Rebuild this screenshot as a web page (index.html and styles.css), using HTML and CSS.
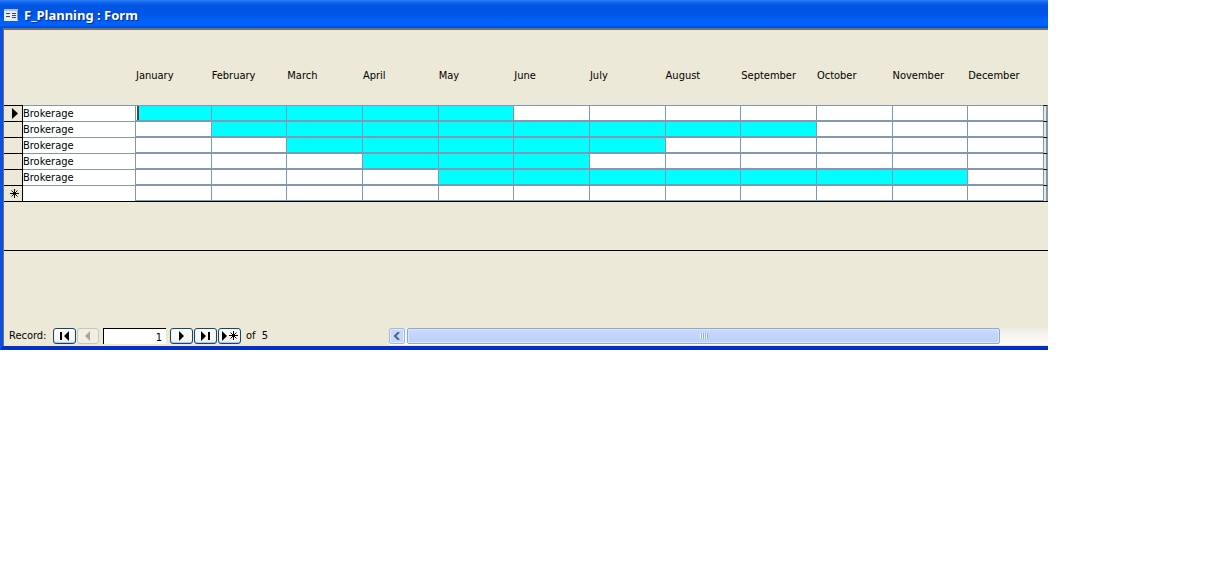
FILE: index.html
```html
<!DOCTYPE html>
<html lang="en">
<head>
<meta charset="utf-8">
<title>F_Planning : Form</title>
<link rel="stylesheet" href="styles.css">
</head>
<body>
<main class="window">
  <header class="titlebar">
    <svg class="form-icon" width="14" height="12" viewBox="0 0 14 12" shape-rendering="crispEdges" aria-hidden="true">
      <rect width="14" height="12" fill="#e9ecf2"/>
      <rect width="14" height="2" fill="#a9c0ec"/>
      <path d="M0 11h14V2h-1v9H0z" fill="#8296bd"/>
      <path d="M2 4h4v1H2zM2 7h4v1H2zM8 4h4v1H8zM8 6h4v1H8zM8 8h4v1H8z" fill="#38465f"/>
    </svg>
    <h1 class="title">F_Planning : Form</h1>
  </header>
  <div class="client">
    <table class="planning">
      <colgroup><col class="col-selector"><col class="col-name"><col span="12"><col class="col-end"></colgroup>
      <thead>
        <tr><td></td><td></td><th scope="col">January</th><th scope="col">February</th><th scope="col">March</th><th scope="col">April</th><th scope="col">May</th><th scope="col">June</th><th scope="col">July</th><th scope="col">August</th><th scope="col">September</th><th scope="col">October</th><th scope="col">November</th><th scope="col">December</th><td></td></tr>
      </thead>
      <tbody>
        <tr><td class="selector"><svg class="mark" width="6" height="11" viewBox="0 0 6 11" aria-hidden="true"><path d="M0 0L6 5.500L0 11z"/></svg></td><td class="name"><input class="name-box" aria-label="Name, record 1" value="Brokerage"></td><td class="month on current"></td><td class="month on"></td><td class="month on"></td><td class="month on"></td><td class="month on"></td><td class="month"></td><td class="month"></td><td class="month"></td><td class="month"></td><td class="month"></td><td class="month"></td><td class="month"></td><td class="end"></td></tr>
        <tr><td class="selector"></td><td class="name"><input class="name-box" aria-label="Name, record 2" value="Brokerage"></td><td class="month"></td><td class="month on"></td><td class="month on"></td><td class="month on"></td><td class="month on"></td><td class="month on"></td><td class="month on"></td><td class="month on"></td><td class="month on"></td><td class="month"></td><td class="month"></td><td class="month"></td><td class="end"></td></tr>
        <tr><td class="selector"></td><td class="name"><input class="name-box" aria-label="Name, record 3" value="Brokerage"></td><td class="month"></td><td class="month"></td><td class="month on"></td><td class="month on"></td><td class="month on"></td><td class="month on"></td><td class="month on"></td><td class="month"></td><td class="month"></td><td class="month"></td><td class="month"></td><td class="month"></td><td class="end"></td></tr>
        <tr><td class="selector"></td><td class="name"><input class="name-box" aria-label="Name, record 4" value="Brokerage"></td><td class="month"></td><td class="month"></td><td class="month"></td><td class="month on"></td><td class="month on"></td><td class="month on"></td><td class="month"></td><td class="month"></td><td class="month"></td><td class="month"></td><td class="month"></td><td class="month"></td><td class="end"></td></tr>
        <tr><td class="selector"></td><td class="name"><input class="name-box" aria-label="Name, record 5" value="Brokerage"></td><td class="month"></td><td class="month"></td><td class="month"></td><td class="month"></td><td class="month on"></td><td class="month on"></td><td class="month on"></td><td class="month on"></td><td class="month on"></td><td class="month on"></td><td class="month on"></td><td class="month"></td><td class="end"></td></tr>
        <tr><td class="selector"><svg class="mark star" width="9" height="9" viewBox="0 0 9 9" aria-hidden="true"><path d="M4.500 0v9M0 4.500h9M1.500 1.500l6 6M7.500 1.500l-6 6"/></svg></td><td class="name"><input class="name-box" aria-label="Name, new record"></td><td class="month"></td><td class="month"></td><td class="month"></td><td class="month"></td><td class="month"></td><td class="month"></td><td class="month"></td><td class="month"></td><td class="month"></td><td class="month"></td><td class="month"></td><td class="month"></td><td class="end"></td></tr>
      </tbody>
    </table>
    <div class="form-footer"></div>
    <div class="bottom">
      <nav class="navigator" aria-label="Records">
        <label class="record-label" for="record">Record:</label>
        <button class="nav-btn" aria-label="First record"><svg width="12" height="10" viewBox="0 0 12 10"><path d="M1 1h2v8H1zM10 0v10L5 5z"/></svg></button>
        <button class="nav-btn previous" aria-label="Previous record" disabled><svg width="12" height="10" viewBox="0 0 12 10"><path d="M8 0v10L3 5z"/></svg></button>
        <input class="record-box" id="record" value="1">
        <button class="nav-btn" aria-label="Next record"><svg width="12" height="10" viewBox="0 0 12 10"><path d="M3 0v10l5-5z"/></svg></button>
        <button class="nav-btn" aria-label="Last record"><svg width="12" height="10" viewBox="0 0 12 10"><path d="M1 0v10l5-5zM8 1h2v8H8z"/></svg></button>
        <button class="nav-btn" aria-label="New record"><svg width="18" height="10" viewBox="0 0 18 10"><path d="M1 0v10l5-5z"/><path class="stroke" d="M12.500 0v9M8 4.500h9M9.500 1.500l6 6M15.500 1.500l-6 6"/></svg></button>
        <span class="total">of&nbsp; 5</span>
      </nav>
      <div class="scrollbar">
        <button class="scroll-btn" aria-label="Scroll left"><svg width="8" height="8" viewBox="0 0 8 8"><path d="M6 0L2 4l4 4"/></svg></button>
        <div class="thumb"><span class="grip"></span></div>
      </div>
    </div>
  </div>
</main>
</body>
</html>
```
FILE: styles.css
```css
* { box-sizing: border-box; }
body {
  margin: 0;
  padding-right: 177px;
  background: #fff;
  color: #000;
  font: 11px/14px "DejaVu Sans Condensed", "Noto Sans", sans-serif;
}
.window {
  border-left: 3px solid #0a50e6;
  border-bottom: 4px solid #0530c8;
  background: #ece9d8;
}
.titlebar {
  display: flex;
  align-items: center;
  gap: 6px;
  height: 28px;
  margin-left: -3px;
  padding: 1px 4px 0;
  background: linear-gradient(#2a84f8 0, #1767ef 2px, #0255e3 5px, #0055e5 14px, #0260fc 21px, #0263ff 25px, #0048d0 28px);
}
.title {
  margin: 0;
  color: #fff;
  font: bold 13px/18px "Noto Sans", sans-serif;
  text-shadow: 1px 1px 1px #0b2a80;
}
.client {
  border-top: 2px solid #74716a;
  border-left: 1px solid #74716a;
}
.planning {
  width: 100%;
  table-layout: fixed;
  border-collapse: separate;
  border-spacing: 0;
  border-bottom: 1px solid #000;
}
.planning td, .planning th { padding: 0; }
.col-selector { width: 19px; }
.col-name { width: 112px; }
.col-end { width: 5px; }
.planning thead th {
  height: 75px;
  padding: 39px 0 0 1px;
  vertical-align: top;
  text-align: left;
  font-weight: normal;
}
.planning tbody tr { height: 16px; }
.selector {
  border-top: 1px solid #000;
  border-right: 1px solid #000;
  text-align: right;
  line-height: 0;
}
.mark { display: inline-block; margin-right: 4px; vertical-align: middle; }
.star { margin-right: 3px; }
.star path, .stroke { fill: none; stroke: #000; stroke-width: 1; }
.name { border-top: 1px solid #8098b4; background: #fff; }
.name-box {
  display: block;
  width: 100%;
  height: 15px;
  padding: 0;
  border: 0;
  background: transparent;
  color: #000;
  font: inherit;
}
.month {
  border: solid #8098b4;
  border-width: 1px 0 1px 1px;
  background: #fff;
}
.on { background: #0ff; }
.current { background: linear-gradient(90deg, #fff 0 1px, #4c4450 1px 3px, #0ff 3px) padding-box; }
.end {
  border-top: 1px solid #000;
  border-left: 1px solid #8098b4;
  border-right: 2px solid #8098b4;
}
.form-footer { height: 49px; border-bottom: 1px solid #000; }
.bottom {
  display: flex;
  align-items: flex-start;
  padding: 77px 0 1px;
}
.navigator {
  display: flex;
  align-items: center;
  flex: 0 0 385px;
  height: 16px;
  padding-left: 5px;
}
.record-label { width: 44px; }
.nav-btn {
  display: flex;
  align-items: center;
  justify-content: center;
  width: 23px;
  height: 16px;
  margin-right: 1px;
  padding: 0;
  border: 1px solid #17456f;
  border-radius: 3px;
  background: linear-gradient(#fff, #f3f2ec);
  box-shadow: inset 0 -1px 1px #a9c4ec;
}
.previous {
  width: 22px;
  border-color: #c9c7ba;
  background: #f1efe4;
  box-shadow: none;
  fill: #aca899;
}
.record-box {
  width: 63px;
  height: 16px;
  margin: 0 4px 0 3px;
  padding: 1px 4px 0;
  border: solid #000;
  border-width: 1px 0 0 1px;
  background: #fff;
  color: #000;
  font: inherit;
  text-align: right;
}
.total { margin-left: 4px; }
.scrollbar {
  display: flex;
  flex: 1;
  height: 17px;
  background: linear-gradient(#efede5, #fefefb);
}
.scroll-btn {
  display: flex;
  align-items: center;
  justify-content: center;
  width: 16px;
  height: 16px;
  margin-right: 2px;
  padding: 0;
  border: 1px solid #a3b9e4;
  border-radius: 2px;
  background: #c6d6fc;
  box-shadow: inset 0 0 0 1px #e4ecff;
}
.scroll-btn path { fill: none; stroke: #4d6185; stroke-width: 2; }
.thumb {
  display: flex;
  align-items: center;
  justify-content: center;
  width: 90%;
  height: 16px;
  border: 1px solid #8fa9d6;
  border-radius: 2px;
  background: linear-gradient(#c9d9ff, #bdd0fa);
  box-shadow: inset 0 0 0 1px #dbe6ff;
}
.grip {
  width: 8px;
  height: 6px;
  background: repeating-linear-gradient(90deg, #eef4ff 0 1px, #8cb0f8 1px 2px);
}
```
